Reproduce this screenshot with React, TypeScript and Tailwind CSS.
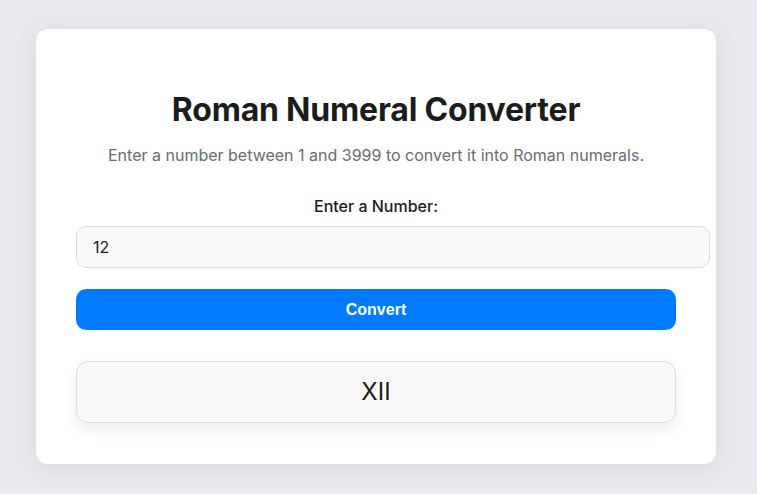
import { useState } from 'react'

const toRoman = (n: number) => {
  const map: [number, string][] = [
    [1000, 'M'], [900, 'CM'], [500, 'D'], [400, 'CD'], [100, 'C'], [90, 'XC'],
    [50, 'L'], [40, 'XL'], [10, 'X'], [9, 'IX'], [5, 'V'], [4, 'IV'], [1, 'I'],
  ]
  let out = ''
  for (const [v, s] of map) {
    while (n >= v) {
      out += s
      n -= v
    }
  }
  return out
}

export default function App() {
  const [value, setValue] = useState('12')
  const [result, setResult] = useState('XII')

  const convert = () => {
    const n = parseInt(value, 10)
    if (isNaN(n) || n < 1 || n > 3999) {
      setResult('Please enter a number between 1 and 3999')
      return
    }
    setResult(toRoman(n))
  }

  return (
    <div className="min-h-screen bg-[#e9e9ee] font-['Inter',sans-serif] py-[29px] pl-[36px]">
      <div className="w-[680px] rounded-xl bg-white px-10 pt-[62px] pb-[41px] shadow-[0_4px_24px_rgba(0,0,0,0.08)] text-center">
        <h1 className="text-[32px] font-bold leading-[38px] tracking-[-0.2px] text-[#1c1c1c]">Roman Numeral Converter</h1>
        <p className="mt-[17px] text-[16px] leading-[19px] text-[#6b6b72]">
          Enter a number between 1 and 3999 to convert it into Roman numerals.
        </p>
        <label className="mt-[32px] block text-[16px] font-medium leading-[18px] text-[#1c1c1c]">Enter a Number:</label>
        <input
          value={value}
          onChange={(e) => setValue(e.target.value)}
          className="mt-[11px] box-content block w-[600px] rounded-[10px] border border-[#dcdcdc] bg-[#f8f8f8] px-4 py-[11px] text-left text-[16px] leading-[18px] text-[#1c1c1c] outline-none"
        />
        <button
          onClick={convert}
          className="mt-[21px] block h-[41px] w-full rounded-[10px] bg-[#007bff] font-['Liberation_Sans',sans-serif] text-[16px] font-bold text-white"
        >
          Convert
        </button>
        <div className="mt-[31px] flex h-[62px] items-center justify-center rounded-xl border border-[#dcdcdc] bg-[#f8f8f8] text-[24px] text-[#1c1c1c] shadow-[0_6px_16px_rgba(0,0,0,0.08)]">
          {result}
        </div>
      </div>
    </div>
  )
}
